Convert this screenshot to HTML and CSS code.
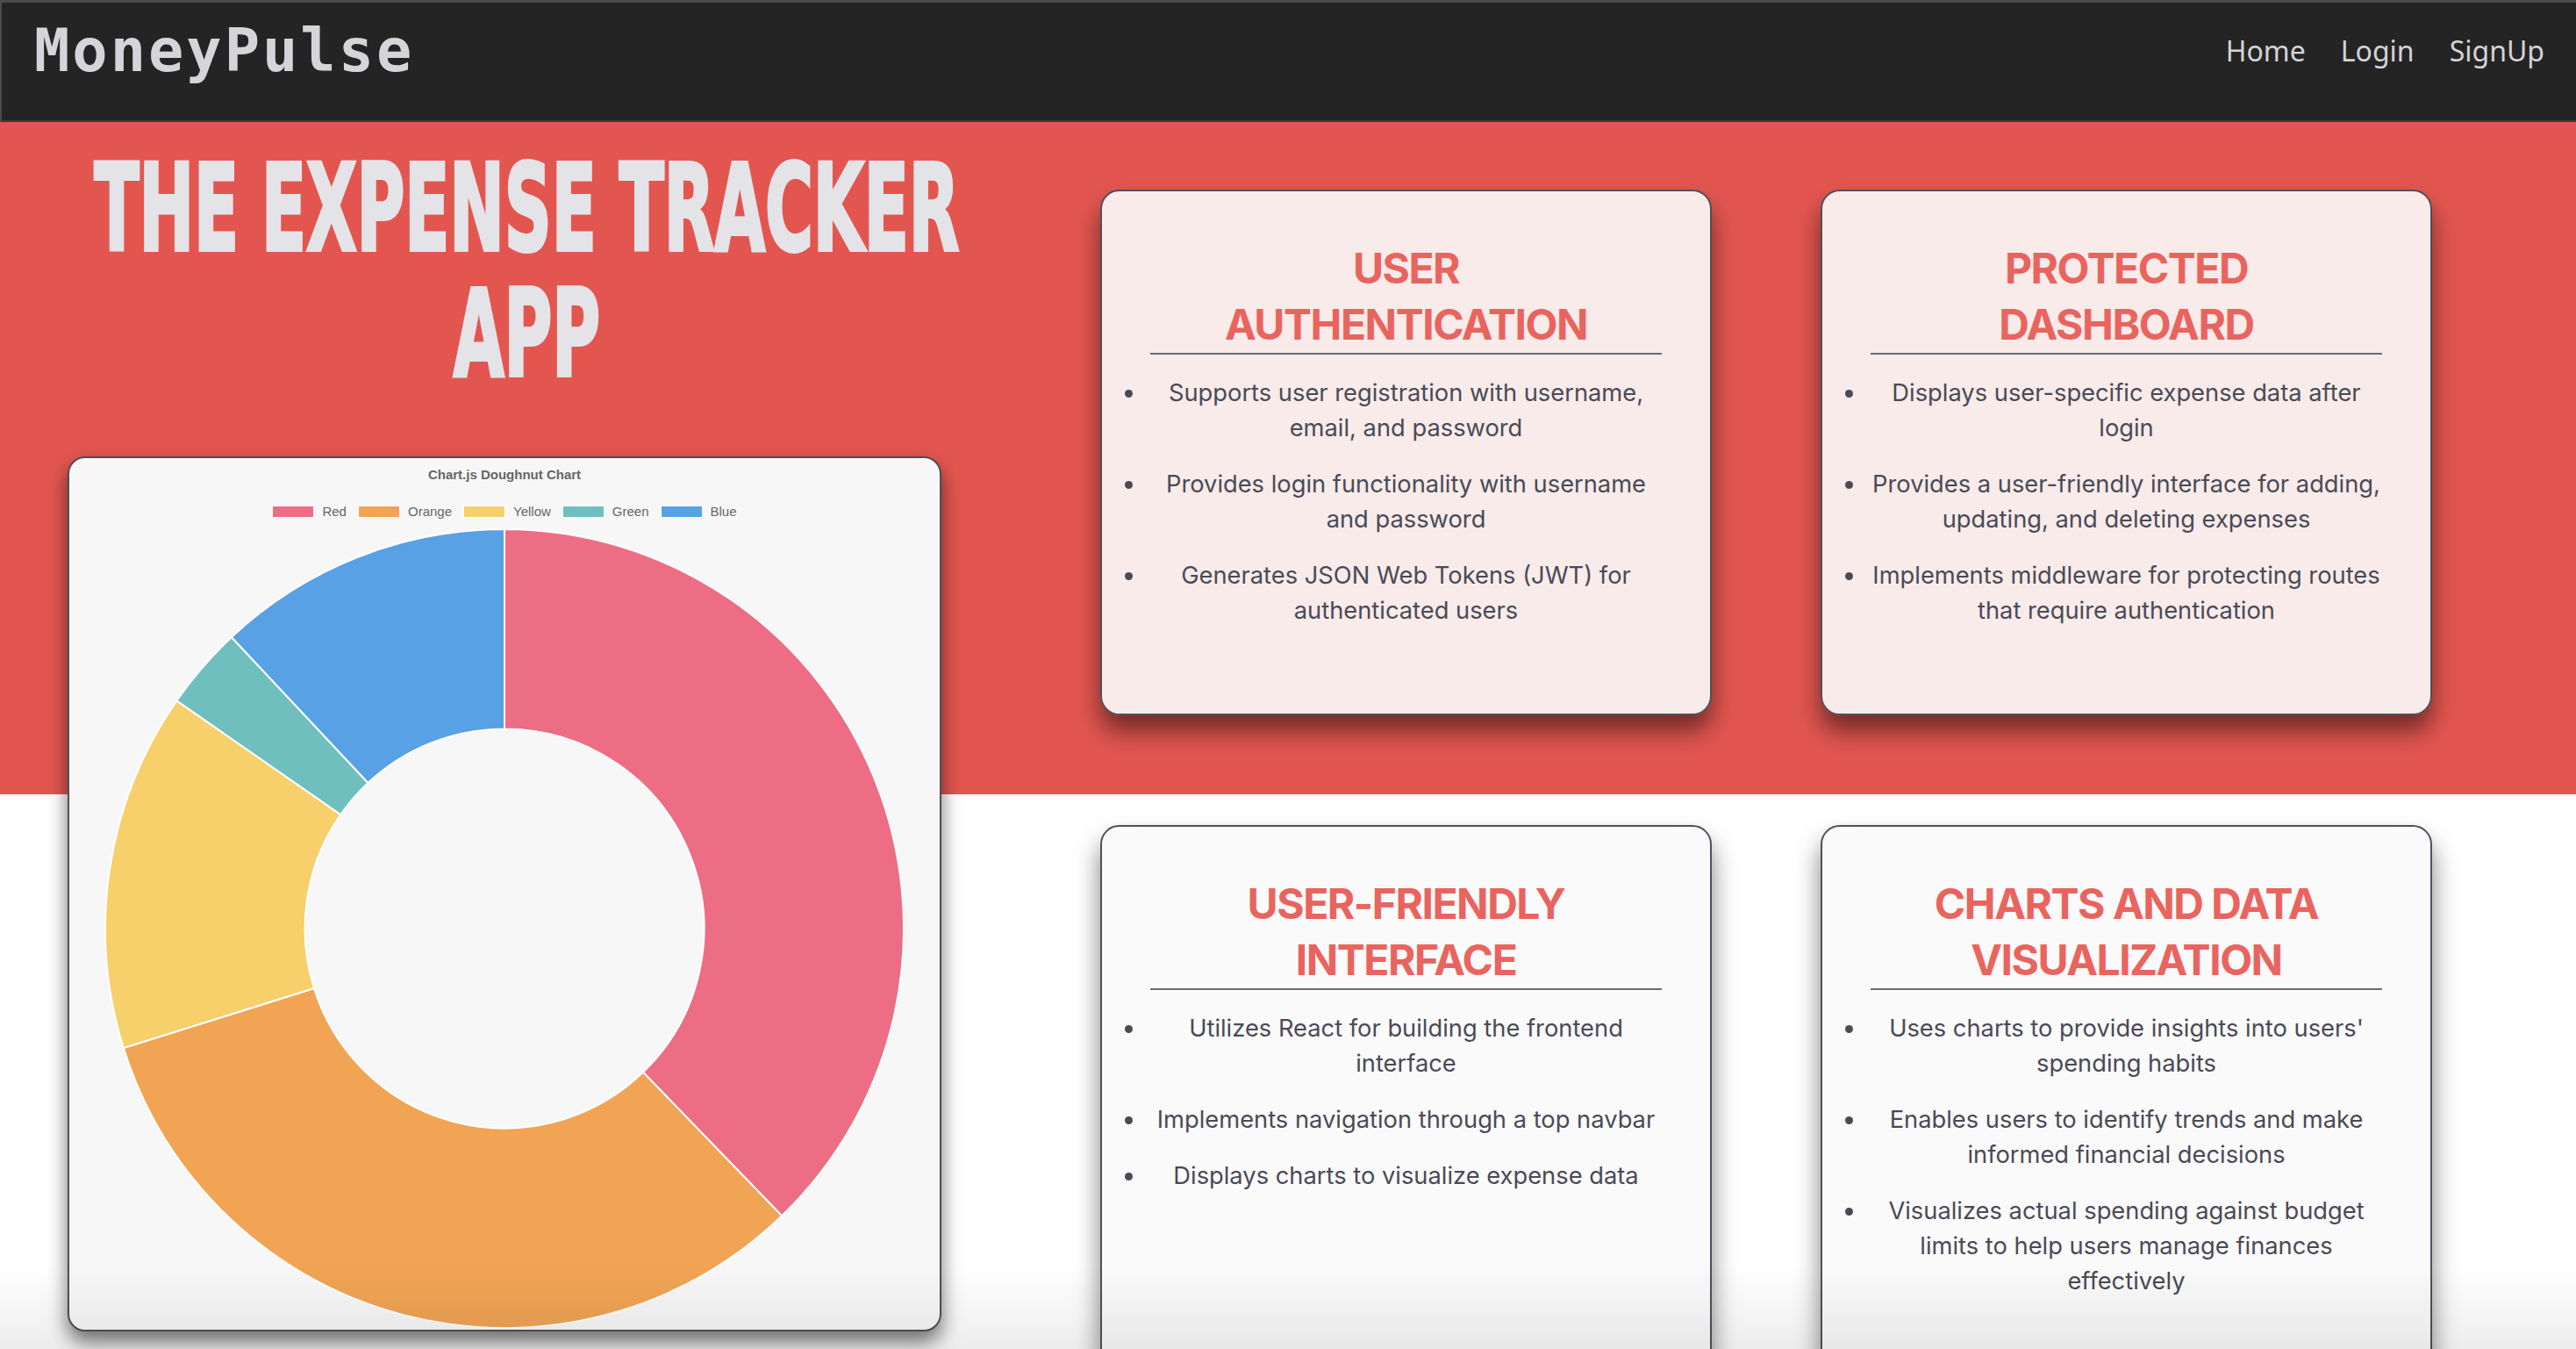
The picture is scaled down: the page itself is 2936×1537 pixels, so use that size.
FILE: index.html
```html
<!DOCTYPE html>
<html lang="en">
<head>
<meta charset="utf-8">
<title>MoneyPulse</title>
<link rel="stylesheet" href="styles.css">
</head>
<body>
<div class="page">
  <nav class="navbar">
    <a class="brand" href="#">MoneyPulse</a>
    <ul class="nav-links">
      <li><a href="#">Home</a></li>
      <li><a href="#">Login</a></li>
      <li><a href="#">SignUp</a></li>
    </ul>
  </nav>
  <main class="hero">
    <section class="intro">
      <h1 class="title">THE EXPENSE TRACKER<br>APP</h1>
      <div class="chart-card">
        <div class="chart-title">Chart.js Doughnut Chart</div>
        <ul class="legend">
          <li><span class="swatch sw-red"></span>Red</li>
          <li><span class="swatch sw-orange"></span>Orange</li>
          <li><span class="swatch sw-yellow"></span>Yellow</li>
          <li><span class="swatch sw-green"></span>Green</li>
          <li><span class="swatch sw-blue"></span>Blue</li>
        </ul>
        <svg class="doughnut" width="914" height="914" viewBox="0 0 914 914">
          <g stroke="#ffffff" stroke-width="2" stroke-linejoin="round">
            <path fill="#ED6D85" d="M457 2 A455 455 0 0 1 773.07 784.30 L615.04 620.65 A227.5 227.5 0 0 0 457 229.5 Z"/>
            <path fill="#F1A454" d="M773.07 784.30 A455 455 0 0 1 22.82 593.06 L239.91 525.03 A227.5 227.5 0 0 0 615.04 620.65 Z"/>
            <path fill="#F7CF6B" d="M22.82 593.06 A455 455 0 0 1 83.38 197.33 L270.19 327.16 A227.5 227.5 0 0 0 239.91 525.03 Z"/>
            <path fill="#6FBFBF" d="M83.38 197.33 A455 455 0 0 1 145.92 124.96 L301.46 290.98 A227.5 227.5 0 0 0 270.19 327.16 Z"/>
            <path fill="#58A1E5" d="M145.92 124.96 A455 455 0 0 1 457 2 L457 229.5 A227.5 227.5 0 0 0 301.46 290.98 Z"/>
          </g>
        </svg>
      </div>
    </section>
    <section class="features">
      <article class="feature-card">
        <h2>USER AUTHENTICATION</h2>
        <ul>
          <li>Supports user registration with username, email, and password</li>
          <li>Provides login functionality with username and password</li>
          <li>Generates JSON Web Tokens (JWT) for authenticated users</li>
        </ul>
      </article>
      <article class="feature-card">
        <h2>PROTECTED DASHBOARD</h2>
        <ul>
          <li>Displays user-specific expense data after login</li>
          <li>Provides a user-friendly interface for adding, updating, and deleting expenses</li>
          <li>Implements middleware for protecting routes that require authentication</li>
        </ul>
      </article>
      <article class="feature-card">
        <h2>USER-FRIENDLY INTERFACE</h2>
        <ul>
          <li>Utilizes React for building the frontend interface</li>
          <li>Implements navigation through a top navbar</li>
          <li>Displays charts to visualize expense data</li>
        </ul>
      </article>
      <article class="feature-card">
        <h2>CHARTS AND DATA VISUALIZATION</h2>
        <ul>
          <li>Uses charts to provide insights into users' spending habits</li>
          <li>Enables users to identify trends and make informed financial decisions</li>
          <li>Visualizes actual spending against budget limits to help users manage finances effectively</li>
        </ul>
      </article>
    </section>
  </main>
  <div class="screen-fade"></div>
</div>
</body>
</html>
```

FILE: styles.css
```css
* {
  box-sizing: border-box;
}

html, body {
  margin: 0;
  padding: 0;
  background: #ffffff;
  overflow: hidden;
}

body {
  font-family: Inter, "Noto Sans", sans-serif;
}

.navbar {
  display: flex;
  justify-content: space-between;
  align-items: flex-start;
  height: 139px;
  background: #242424;
  border-top: 3px solid #4a4a4f;
  border-left: 2px solid #4a4a4f;
  border-bottom: 2px solid #3a3a3e;
  padding: 0 36px 0 37px;
}

.brand {
  margin-top: 22px;
  font-family: "DejaVu Sans Mono", monospace;
  font-weight: 700;
  font-size: 67px;
  line-height: 1;
  letter-spacing: 3px;
  color: #d4d4d9;
  text-decoration: none;
}

.nav-links {
  display: flex;
  gap: 40px;
  list-style: none;
  margin: 39px 0 0;
  padding: 0;
}

.nav-links a {
  font-family: "Noto Sans", sans-serif;
  font-size: 32px;
  line-height: 1;
  color: #d3d3d8;
  text-decoration: none;
}

.hero {
  display: flex;
  align-items: flex-start;
  background: linear-gradient(to bottom, #E35650 0, #E35650 766px, #ffffff 766px);
  min-height: 1398px;
}

.intro {
  width: 1200px;
  flex: none;
  display: flex;
  flex-direction: column;
  align-items: center;
  padding-top: 27px;
}

.title {
  margin: 0;
  text-align: center;
  white-space: nowrap;
  font-family: "DejaVu Sans Condensed", "DejaVu Sans", sans-serif;
  font-stretch: condensed;
  font-weight: 700;
  font-size: 137px;
  line-height: 143px;
  color: #e4e4e8;
  -webkit-text-stroke: 4px #e4e4e8;
  transform: scaleX(0.606);
}

.chart-card {
  align-self: flex-start;
  margin: 68px 0 0 77px;
  width: 996px;
  height: 997px;
  border: 2px solid #4f4f55;
  border-radius: 20px;
  background: #f7f7f7;
  box-shadow: 0 12px 22px rgba(0, 0, 0, 0.55);
  padding-top: 10px;
  display: flex;
  flex-direction: column;
  align-items: center;
  overflow: hidden;
}

.chart-title {
  font-family: "Liberation Sans", Arial, sans-serif;
  font-weight: 700;
  font-size: 15px;
  line-height: 18px;
  color: #666666;
}

.legend {
  display: flex;
  align-items: center;
  gap: 13px;
  list-style: none;
  margin: 21px 0 0;
  padding: 0;
  height: 24px;
  font-family: "Liberation Sans", Arial, sans-serif;
  font-size: 15px;
  line-height: 24px;
  color: #666666;
}

.legend li {
  display: flex;
  align-items: center;
  gap: 9px;
}

.swatch {
  display: block;
  width: 48px;
  height: 14px;
  border: 1px solid #ffffff;
}

.sw-red { background: #ED6D85; }
.sw-orange { background: #F1A454; }
.sw-yellow { background: #F7CF6B; }
.sw-green { background: #6FBFBF; }
.sw-blue { background: #58A1E5; }

.doughnut {
  display: block;
  margin-top: 6px;
}

.features {
  display: grid;
  grid-template-columns: 697px 697px;
  column-gap: 124px;
  row-gap: 125px;
  margin-left: 54px;
  padding-top: 77px;
}

.feature-card {
  border: 2px solid #505058;
  border-radius: 22px;
  background: rgba(250, 250, 250, 0.91);
  box-shadow: 0 18px 28px rgba(0, 0, 0, 0.5);
  padding: 55.75px 0 97px;
  text-align: center;
}

.feature-card h2 {
  margin: 0 55px;
  padding: 0 20px;
  border-bottom: 2px solid #6b6b73;
  font-family: Inter, sans-serif;
  font-weight: 700;
  font-size: 48px;
  letter-spacing: -1.5px;
  line-height: 64px;
  color: #E9645E;
}

.feature-card ul {
  margin: 24px 0 0;
  padding: 0 50px;
  color: #4a4a56;
  font-family: Inter, sans-serif;
  font-size: 27.3px;
  line-height: 40px;
}

.feature-card li + li {
  margin-top: 24px;
}

.screen-fade {
  position: fixed;
  left: 0;
  right: 0;
  bottom: 0;
  height: 95px;
  background: linear-gradient(to bottom, rgba(0, 0, 0, 0), rgba(0, 0, 0, 0.07));
  pointer-events: none;
}
```
